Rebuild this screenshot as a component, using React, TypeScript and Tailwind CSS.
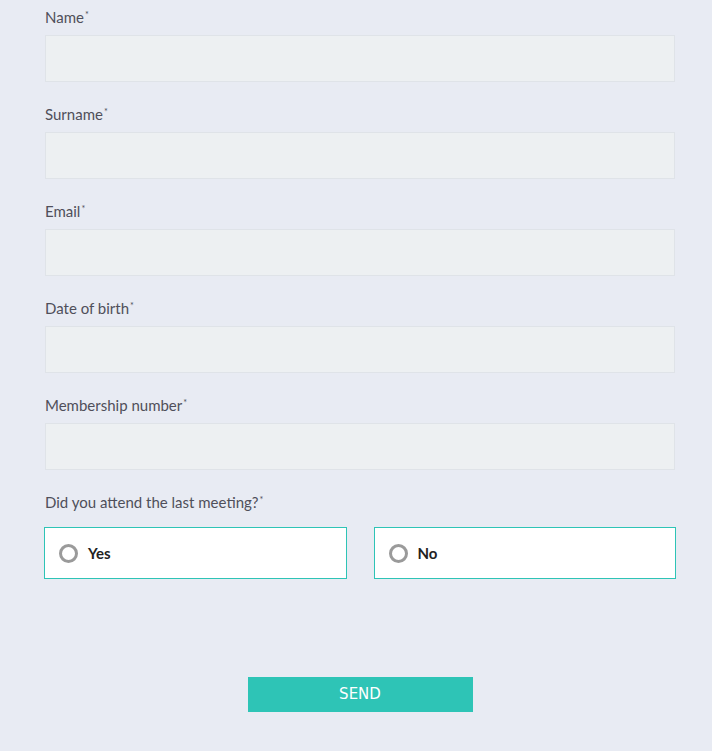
import React from 'react';

const fields = ['Name', 'Surname', 'Email', 'Date of birth', 'Membership number'];

const Label: React.FC<{ text: string }> = ({ text }) => (
  <label className="block text-[15px] leading-5 text-[#4f4f5a]">
    {text}
    <span className="text-[9px] leading-none relative -top-[5px] ml-[1px]">*</span>
  </label>
);

const Radio: React.FC<{ text: string }> = ({ text }) => (
  <label className="flex items-center h-[52px] bg-white border border-[#2ec4b6] pl-[14px] cursor-pointer">
    <span className="w-[19px] h-[19px] rounded-full border-[3px] border-[#9a9a9a] bg-white" />
    <span className="ml-[10px] text-[15px] font-bold text-[#222]">{text}</span>
  </label>
);

export default function App() {
  return (
    <div className="min-h-[751px] bg-[#e8ebf3] font-['Lato','Open_Sans',sans-serif]">
      <form className="ml-[45px] w-[630px] pt-[7px]">
        {fields.map((f, i) => (
          <div key={f} className={i === 0 ? '' : 'mt-[22px]'}>
            <Label text={f} />
            <input
              type="text"
              className="mt-[8px] block w-full h-[47px] bg-[#edf0f2] border border-[#dfe3e8] outline-none px-3"
            />
          </div>
        ))}

        <div className="mt-[22px]">
          <Label text="Did you attend the last meeting?" />
          <div className="mt-[15px] -mx-px grid grid-cols-2 gap-[27px]">
            <Radio text="Yes" />
            <Radio text="No" />
          </div>
        </div>

        <div className="flex justify-center mt-[98px]">
          <button
            type="button"
            className="w-[225px] h-[35px] bg-[#2ec4b6] text-white text-[15px] font-['DejaVu_Sans',sans-serif]"
          >
            SEND
          </button>
        </div>
      </form>
    </div>
  );
}
